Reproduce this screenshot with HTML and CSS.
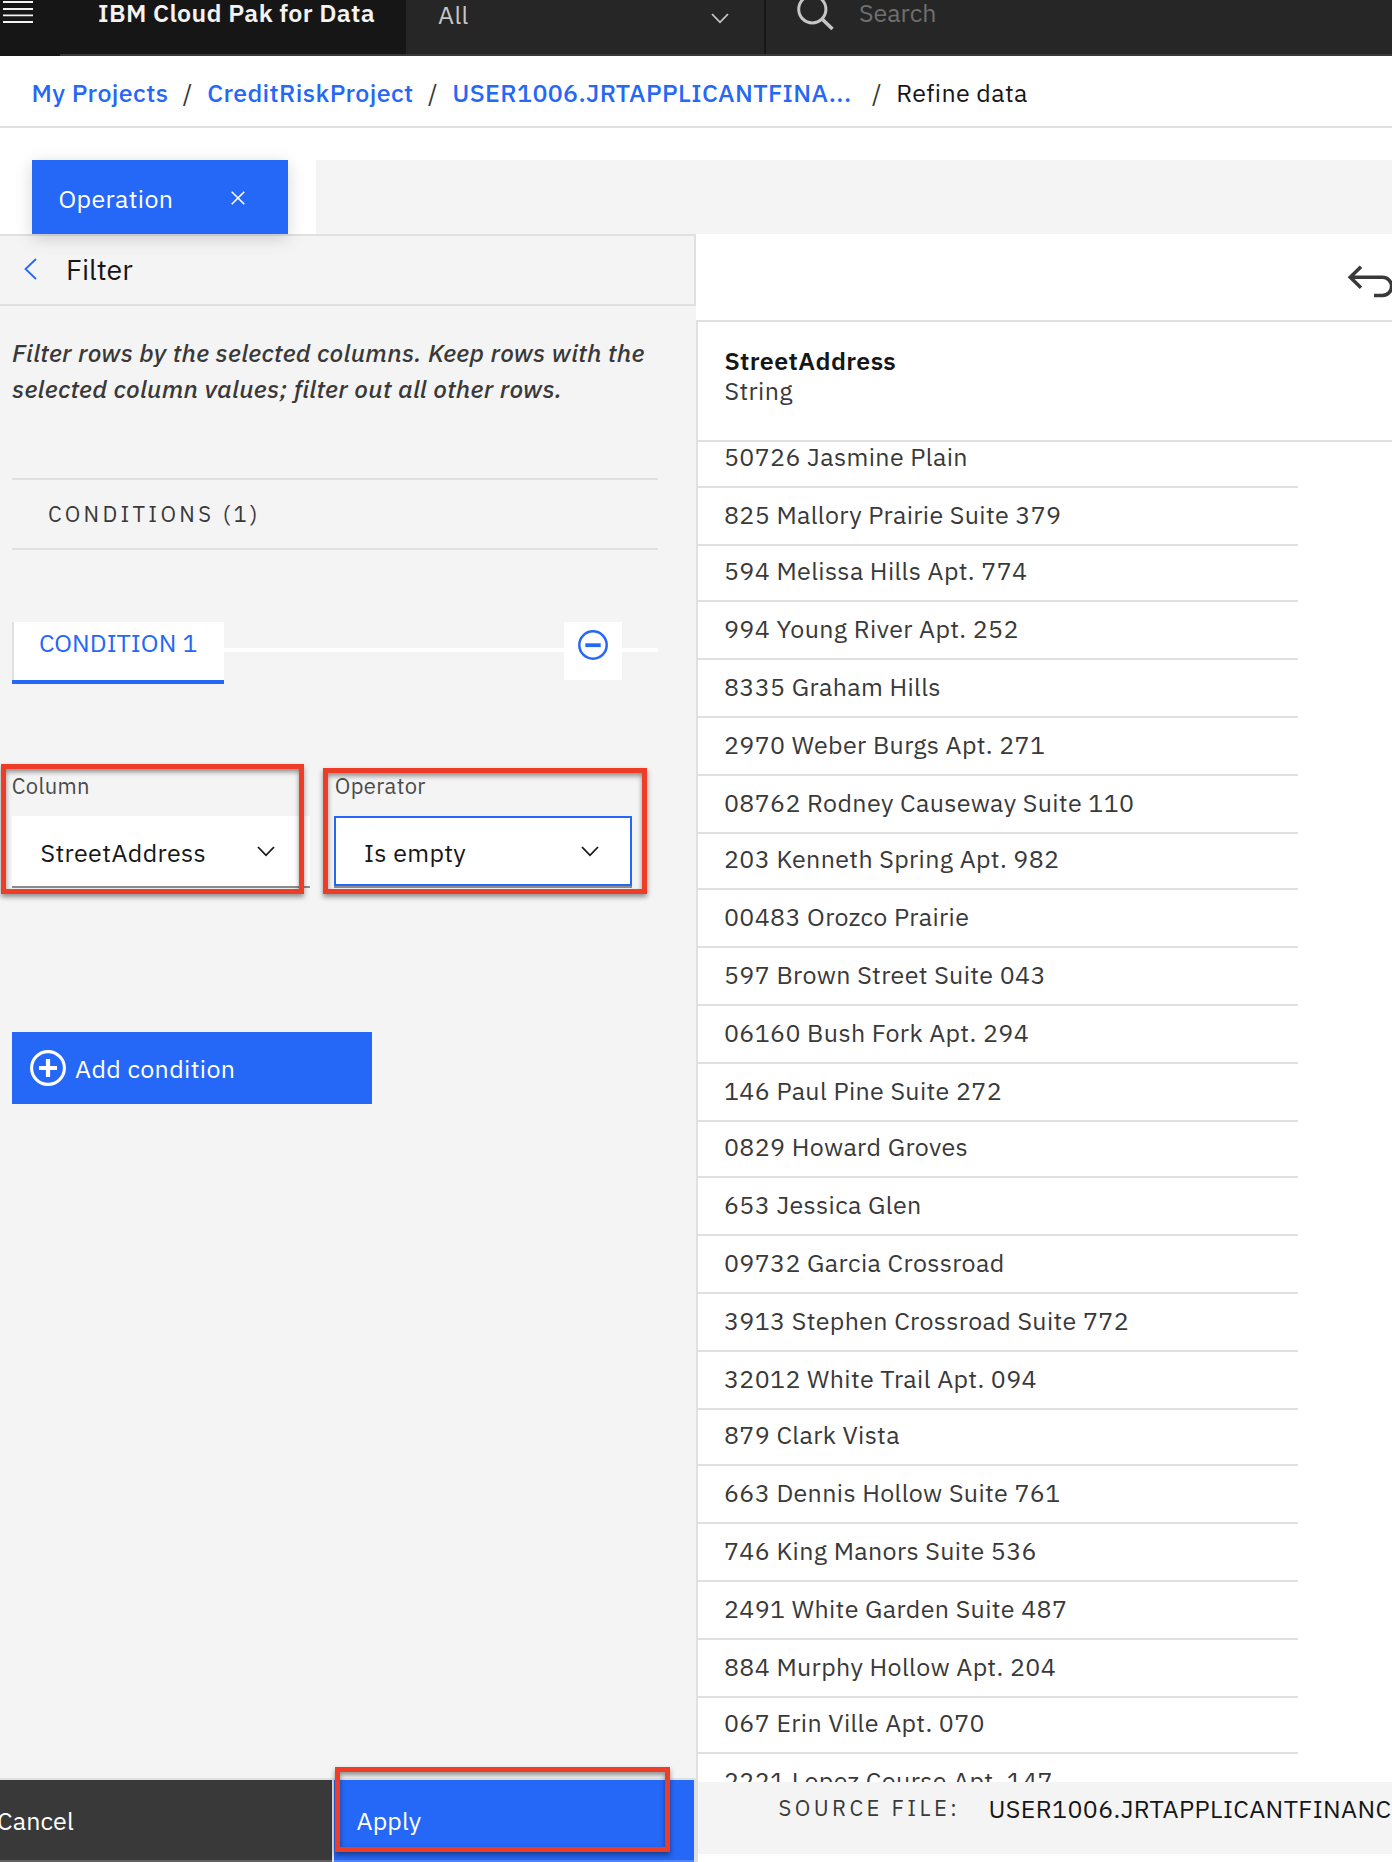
FILE: index.html
```html
<!DOCTYPE html>
<html lang="en">
<head>
<meta charset="utf-8">
<title>Refine data</title>
<link rel="stylesheet" href="styles.css">
</head>
<body>
<header class="topbar">
  <div class="brand">
    <svg class="menu" width="30" height="24" viewBox="0 0 30 24"><path d="M0 2h30M0 9h30M0 15.3h30M0 22h30" stroke="#f3f3f3" stroke-width="1.8"/></svg>
    <span class="brand-name">IBM Cloud Pak for Data</span>
  </div>
  <div class="scope">
    <span>All</span>
    <svg class="scope-chevron" width="18" height="11" viewBox="0 0 18 11"><path d="M1 1l8 8.3L17 1" fill="none" stroke="#c6c6c6" stroke-width="1.8"/></svg>
  </div>
  <div class="search">
    <svg width="38" height="32" viewBox="0 0 38 32"><circle cx="15.3" cy="9.3" r="13.6" fill="none" stroke="#c6c6c6" stroke-width="3"/><path d="M25 19l10.5 10" stroke="#c6c6c6" stroke-width="3.6"/></svg>
    <span>Search</span>
  </div>
</header>

<nav class="crumbs">
  <a>My Projects</a><i>/</i><a>CreditRiskProject</a><i>/</i><a class="long">USER1006.JRTAPPLICANTFINA...</a><i>/</i><span>Refine data</span>
</nav>

<div class="tabs">
  <div class="tab">Operation
    <svg width="14" height="14" viewBox="0 0 14 14"><path d="M.7.7l12.6 12.6M13.3.7L.7 13.3" stroke="#fff" stroke-width="1.6"/></svg>
  </div>
  <div class="codebar"></div>
</div>

<div class="main">
  <aside class="panel">
    <div class="panel-head">
      <svg width="13" height="22" viewBox="0 0 13 22"><path d="M12 1L1.5 11 12 21" fill="none" stroke="#2567f6" stroke-width="1.8"/></svg>
      <span>Filter</span>
    </div>
    <div class="panel-body">
      <p class="desc">Filter rows by the selected columns. Keep rows with the selected column values; filter out all other rows.</p>
      <div class="conditions">CONDITIONS (1)</div>
      <div class="cond-row">
        <div class="cond-tab">CONDITION 1</div>
        <div class="rule"></div>
        <div class="remove"><svg width="30" height="30" viewBox="0 0 30 30"><circle cx="15" cy="15" r="13.7" fill="none" stroke="#2567f6" stroke-width="2.5"/><path d="M7.3 15.2h15.4" stroke="#2567f6" stroke-width="3.8"/></svg></div>
        <div class="rule short"></div>
      </div>
      <div class="fields">
        <div class="field">
          <label>Column</label>
          <div class="select">StreetAddress<svg width="18" height="11" viewBox="0 0 18 11"><path d="M1 1l8 8.3L17 1" fill="none" stroke="#161616" stroke-width="1.8"/></svg></div>
          <div class="mark mark-column"></div>
        </div>
        <div class="field">
          <label>Operator</label>
          <div class="select focus">Is empty<svg width="18" height="11" viewBox="0 0 18 11"><path d="M1 1l8 8.3L17 1" fill="none" stroke="#161616" stroke-width="1.8"/></svg></div>
          <div class="mark mark-operator"></div>
        </div>
      </div>
      <div class="add"><svg width="36" height="36" viewBox="0 0 36 36"><circle cx="18" cy="18" r="16.4" fill="none" stroke="#fff" stroke-width="3.1"/><path d="M18 9v18M9 18h18" stroke="#fff" stroke-width="4.2"/></svg>Add condition</div>
    </div>
    <div class="actions">
      <div class="cancel">Cancel</div>
      <div class="apply">Apply<div class="mark mark-apply"></div></div>
    </div>
  </aside>

  <section class="content">
    <div class="toolbar">
      <svg width="46" height="36" viewBox="0 0 46 36"><path d="M14 1.8L3.2 12.3l10.8 10.5M4 12.3h31.5a9 9 0 0 1 0 18.2H27" fill="none" stroke="#393939" stroke-width="3.5"/></svg>
    </div>
    <div class="table">
      <div class="thead"><b>StreetAddress</b><span>String</span></div>
      <div class="rows">
        <div class="row first">50726 Jasmine Plain</div>
        <div class="row">825 Mallory Prairie Suite 379</div>
        <div class="row tight">594 Melissa Hills Apt. 774</div>
        <div class="row">994 Young River Apt. 252</div>
        <div class="row">8335 Graham Hills</div>
        <div class="row">2970 Weber Burgs Apt. 271</div>
        <div class="row">08762 Rodney Causeway Suite 110</div>
        <div class="row tight">203 Kenneth Spring Apt. 982</div>
        <div class="row">00483 Orozco Prairie</div>
        <div class="row">597 Brown Street Suite 043</div>
        <div class="row">06160 Bush Fork Apt. 294</div>
        <div class="row">146 Paul Pine Suite 272</div>
        <div class="row tight">0829 Howard Groves</div>
        <div class="row">653 Jessica Glen</div>
        <div class="row">09732 Garcia Crossroad</div>
        <div class="row">3913 Stephen Crossroad Suite 772</div>
        <div class="row">32012 White Trail Apt. 094</div>
        <div class="row tight">879 Clark Vista</div>
        <div class="row">663 Dennis Hollow Suite 761</div>
        <div class="row">746 King Manors Suite 536</div>
        <div class="row">2491 White Garden Suite 487</div>
        <div class="row">884 Murphy Hollow Apt. 204</div>
        <div class="row tight">067 Erin Ville Apt. 070</div>
        <div class="row">2221 Lopez Course Apt. 147</div>
      </div>
      <div class="source"><span>SOURCE FILE:</span><em>USER1006.JRTAPPLICANTFINANC</em></div>
    </div>
  </section>
</div>
</body>
</html>
```

FILE: styles.css
```css
* { box-sizing: border-box; }
body {
  margin: 0;
  width: 1392px;
  height: 1862px;
  overflow: hidden;
  display: flex;
  flex-direction: column;
  background: #fff;
  color: #161616;
  font-family: "IBM Plex Sans", Roboto, "Noto Sans", sans-serif;
  font-size: 25px;
  letter-spacing: 0.37px;
  white-space: nowrap;
}
svg { display: block; flex: none; }

.topbar { display: flex; height: 56px; flex: none; line-height: 26px; background: linear-gradient(#393939, #393939) 60px 54px / 1332px 2px no-repeat #161616; }
.brand { width: 406px; display: flex; padding-left: 3px; gap: 65px; color: #f3f3f3; font-weight: 600; }
.brand-name { flex: 1; }
.scope { width: 360px; height: 54px; background: #262626; border-right: 2px solid #161616; display: flex; justify-content: space-between; padding: 2px 35px 0 32px; color: #c6c6c6; }
.scope-chevron { margin-top: 10.5px; }
.search { flex: 1; height: 54px; background: #262626; display: flex; gap: 24px; padding-left: 31px; color: #6f6f6f; letter-spacing: 0; }

.crumbs { height: 72px; flex: none; border-bottom: 2px solid #e0e0e0; padding-left: 31.6px; display: flex; line-height: 73px; }
.crumbs a { color: #2567f6; font-weight: 500; }
.crumbs i { font-style: normal; margin: 0 14.4px; color: #393939; }
.crumbs .long { margin-right: 6px; }

.tabs { display: flex; gap: 28px; padding: 32px 0 0 32px; height: 106px; flex: none; }
.tab { width: 256px; height: 74px; background: #2567f6; color: #fff; line-height: 77px; display: flex; justify-content: space-between; padding: 0 43px 0 26.5px; box-shadow: 0 4px 16px rgba(0,0,0,.17); position: relative; z-index: 1; }
.tab svg { margin-top: 31px; }
.codebar { flex: 1; background: #f4f4f4; }

.main { display: flex; flex: 1; min-height: 0; }
.panel { width: 696px; background: #f4f4f4; display: flex; flex-direction: column; }
.panel-head { height: 72px; border: 2px solid #e0e0e0; border-left: 0; display: flex; gap: 29.5px; padding-left: 23.5px; line-height: 67px; font-size: 28.5px; letter-spacing: 0; }
.panel-head svg { margin-top: 22px; }
.panel-body { flex: 1; padding: 29px 38px 0 12px; }
.desc { margin: 0; width: 646px; height: 143px; white-space: normal; line-height: 36px; letter-spacing: .35px; font-weight: 500; font-style: italic; color: #393939; }
.conditions { height: 72px; border: solid #e0e0e0; border-width: 2px 0; line-height: 68px; font-size: 22px; letter-spacing: 3.32px; padding-left: 36px; color: #393939; }
.cond-row { display: flex; margin-top: 72px; height: 62px; }
.cond-tab { width: 212px; background: linear-gradient(#e0e0e0, #e0e0e0) 0 0 / 2px 100% no-repeat #fff; border-bottom: 4px solid #2567f6; color: #2567f6; line-height: 41px; padding-left: 27px; letter-spacing: 0.08px; }
.rule { flex: 1; height: 4px; margin-top: 26px; background: #fff; }
.rule.short { flex: none; width: 36px; }
.remove { width: 58px; height: 58px; background: #fff; padding: 8px 0 0 14px; }
.fields { display: flex; gap: 24px; margin-top: 88px; }
.field { width: 298px; position: relative; }
.field label { display: block; height: 44px; line-height: 28px; font-size: 22px; letter-spacing: .35px; color: #4a4a4a; text-indent: -.3px; }
.field + .field label { text-indent: .8px; }
.select { height: 72px; background: #fff; border-bottom: 2px solid #8d8d8d; line-height: 73px; padding: 0 35px 0 28.5px; display: flex; justify-content: space-between; }
.select svg { margin-top: 30px; }
.select.focus { box-shadow: inset 0 0 0 2px #2567f6; padding-left: 30px; padding-right: 33px; }
.mark { position: absolute; border: 5px solid #ee3d26; box-shadow: 0 3px 5px rgba(0,0,0,.42), inset 0 3px 5px rgba(0,0,0,.42); }
.mark-column { left: -11px; top: -8px; width: 303px; height: 130px; }
.mark-operator { left: -11px; top: -4px; width: 324px; height: 126px; }
.add { margin-top: 144px; width: 360px; height: 72px; background: #2567f6; color: #fff; line-height: 73px; display: flex; gap: 9px; padding-left: 18px; }
.add svg { margin-top: 18px; }
.actions { height: 84px; border-top: 2px solid #e0e0e0; display: flex; gap: 2px; color: #fff; line-height: 81px; padding-right: 2px; background: #e0e0e0; letter-spacing: 0.15px; }
.cancel { width: 332px; background: #393939; border-bottom: 2px solid #606060; text-indent: -3px; overflow: hidden; }
.apply { flex: 1; background: #2567f6; border-bottom: 2px solid #5286f8; padding-left: 22.5px; position: relative; }
.mark-apply { left: 1px; top: -13px; width: 335px; height: 85px; }

.content { flex: 1; min-width: 0; display: flex; flex-direction: column; }
.toolbar { height: 86px; padding: 31px 0 0 650.7px; overflow: hidden; }
.table { flex: 1; min-height: 0; border: solid #e0e0e0; border-width: 2px 0 0 2px; display: flex; flex-direction: column; }
.thead { height: 120px; flex: none; border-bottom: 2px solid #e0e0e0; padding: 24px 0 0 26.5px; line-height: 30px; }
.thead b { font-weight: 600; display: block; }
.thead span { color: #393939; display: block; }
.rows { height: 1340px; flex: none; overflow: hidden; width: 600px; color: #393939; }
.row { height: 58px; border-bottom: 2px solid #e0e0e0; line-height: 30px; display: flex; align-items: flex-end; padding: 0 0 14px 26px; }
.row.tight { height: 56px; }
.row.first { height: 46px; }
.source { height: 72px; flex: none; background: #f4f4f4; display: flex; line-height: 53px; overflow: hidden; padding-left: 80.5px; }
.source span { font-size: 22px; letter-spacing: 3.45px; line-height: 52px; width: 210px; color: #393939; }
.source em { font-style: normal; }
```
